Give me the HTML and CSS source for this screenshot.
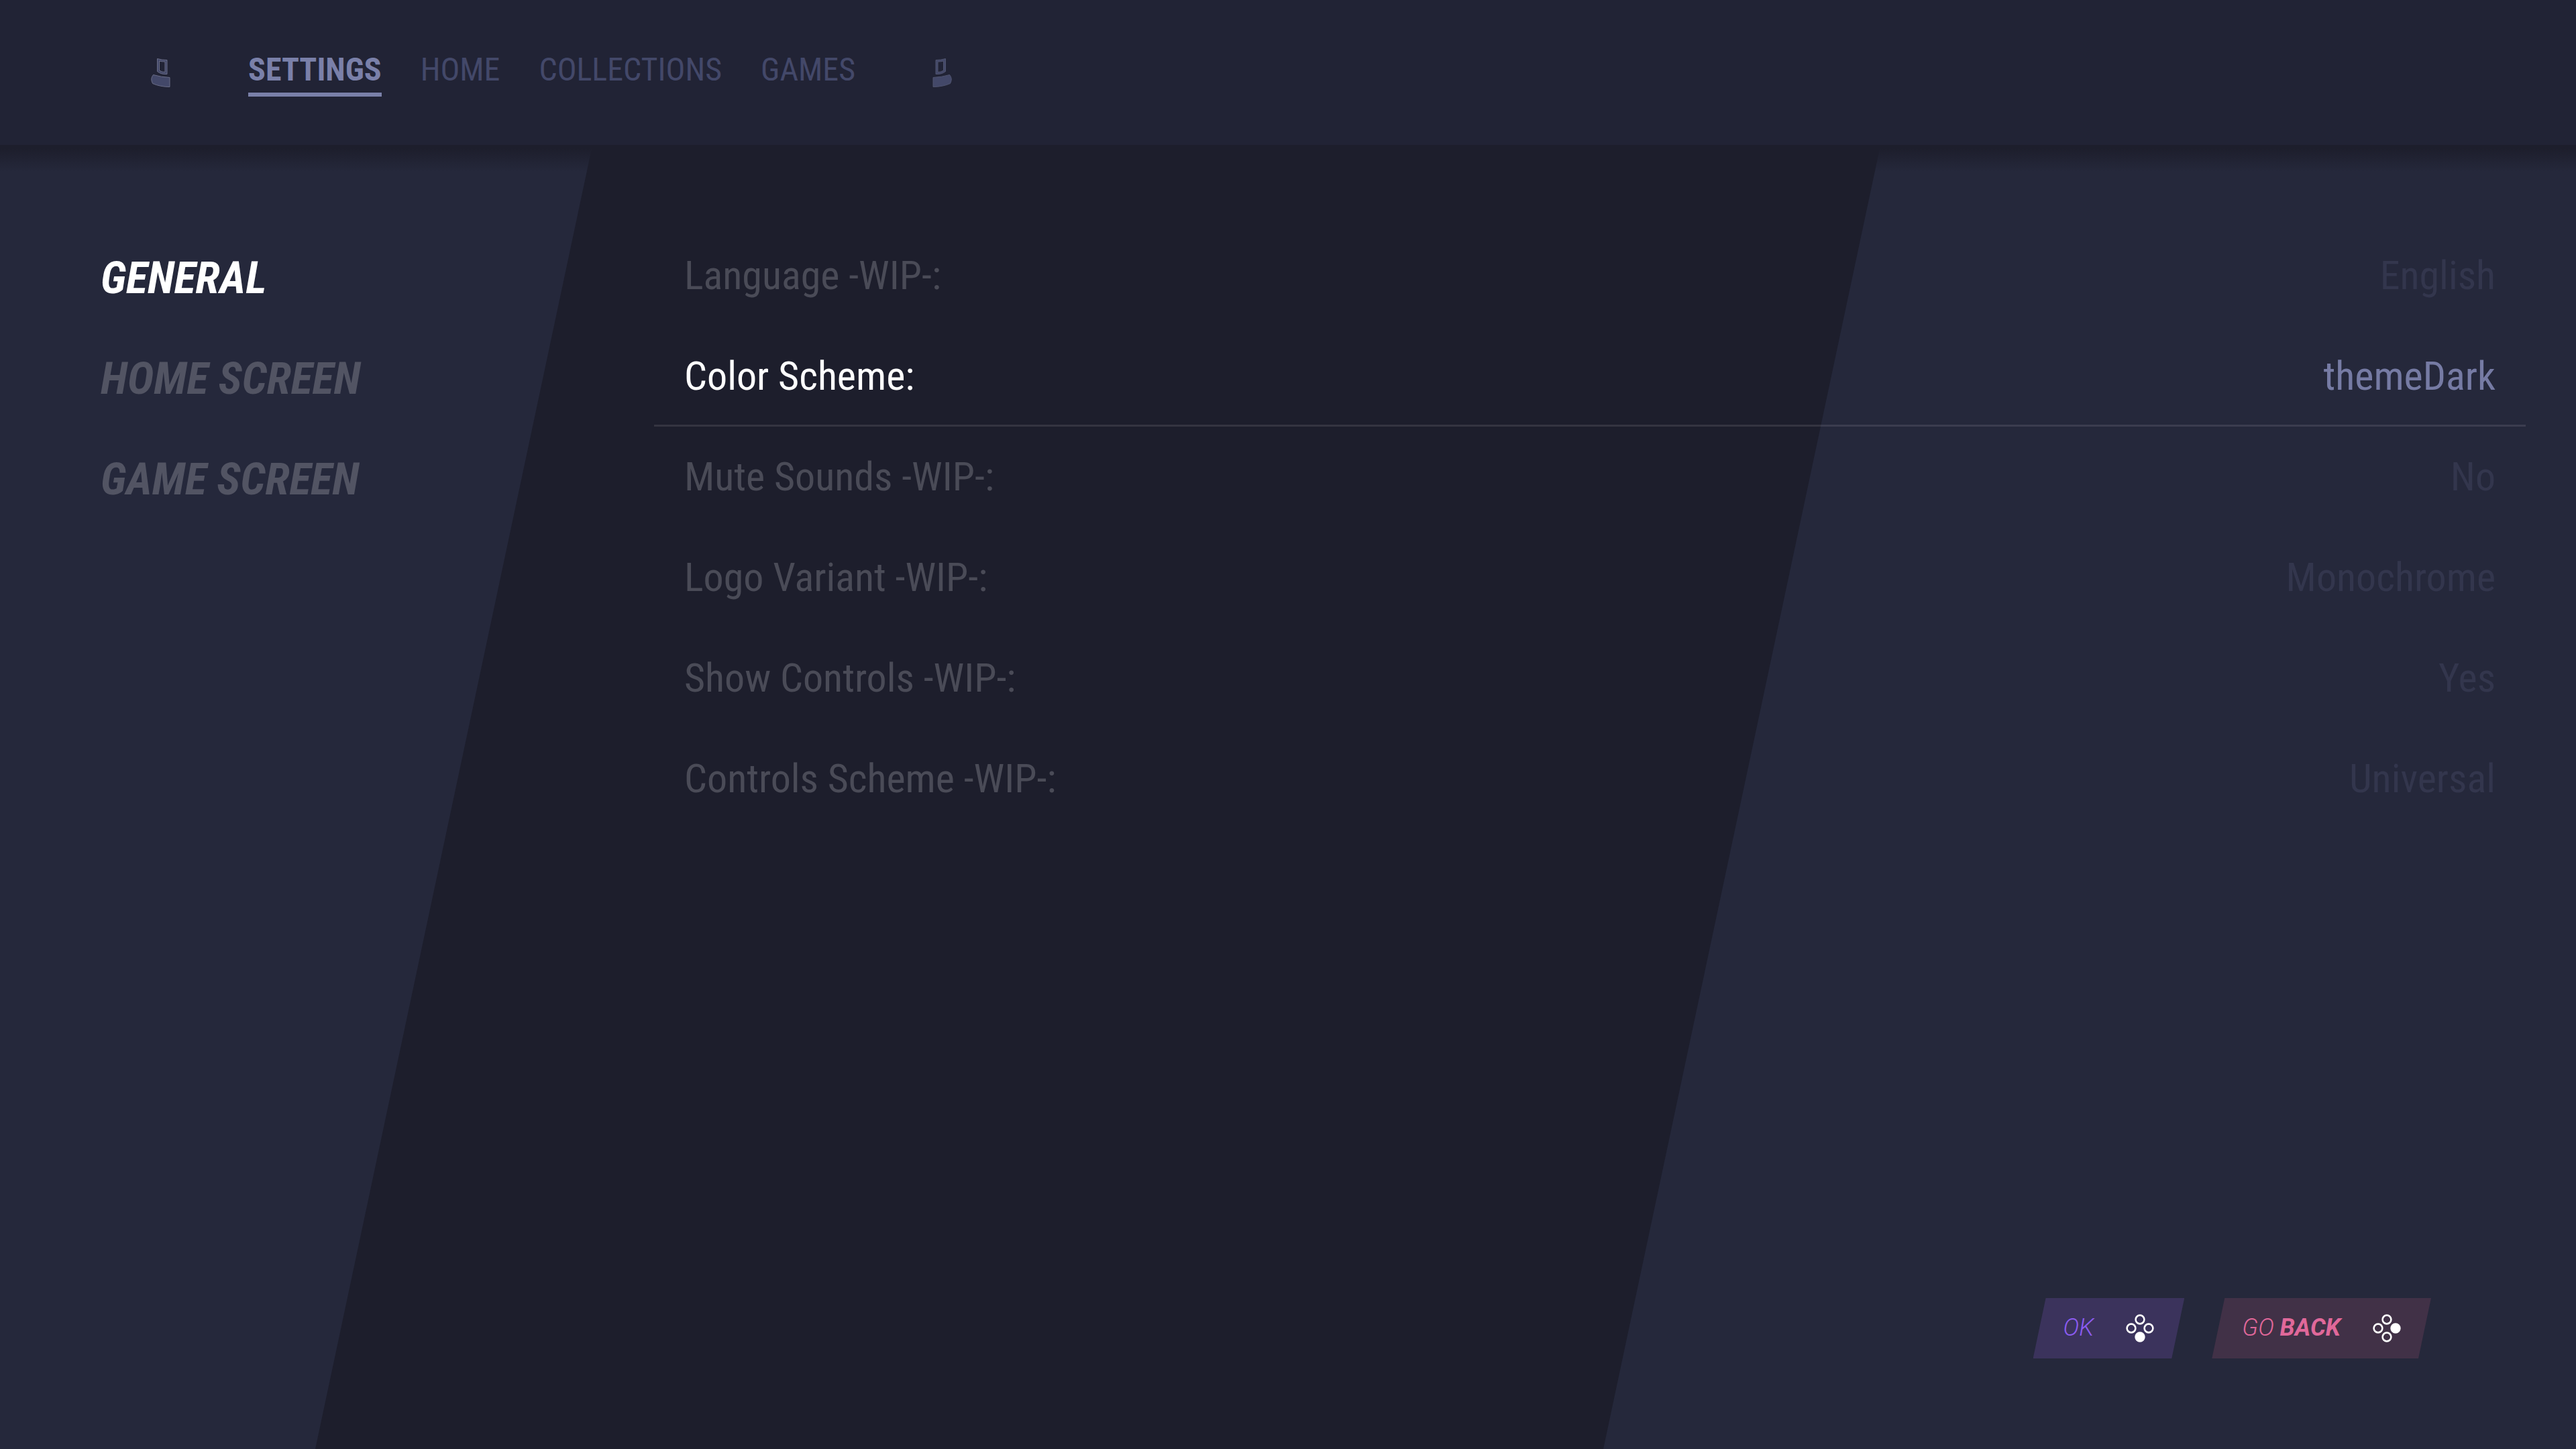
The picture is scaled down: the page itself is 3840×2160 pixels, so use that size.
FILE: index.html
```html
<!DOCTYPE html>
<html lang="en">
<head>
<meta charset="utf-8">
<title>Settings</title>
<link rel="stylesheet" href="styles.css">
</head>
<body>
<header class="topbar">
  <svg class="bumper" viewBox="0 0 32 46" aria-hidden="true">
    <path class="bumper-shape" fill-rule="evenodd" d="M11.5 1.5 Q18 3.5 26 3.5 V24.5 Q17 25 11.5 20.5 Z M14.500 5 V19 Q18 21.500 23 21.500 V6 Q18 6 14.500 5 Z"/>
    <path class="bumper-shape" d="M5.500 25.500 Q17 29 30 29.500 V43.500 Q16 43.500 4.500 38.500 Q0.500 31 5.500 25.500 Z"/>
  </svg>
  <nav class="tabs">
    <a class="tab tab-active" href="#settings">SETTINGS</a>
    <a class="tab" href="#home">HOME</a>
    <a class="tab" href="#collections">COLLECTIONS</a>
    <a class="tab" href="#games">GAMES</a>
  </nav>
  <svg class="bumper bumper-right" viewBox="0 0 32 46" aria-hidden="true">
    <path class="bumper-shape" fill-rule="evenodd" d="M11.500 1.500 Q18 3.500 26 3.500 V24.500 Q17 25 11.500 20.500 Z M14.500 5 V19 Q18 21.500 23 21.500 V6 Q18 6 14.500 5 Z" transform="matrix(-1 0 0 1 32 0)"/>
    <path class="bumper-shape" d="M5.500 25.500 Q17 29 30 29.500 V43.500 Q16 43.500 4.500 38.500 Q0.500 31 5.500 25.500 Z" transform="matrix(-1 0 0 1 32 0)"/>
  </svg>
</header>
<main class="screen">
  <div class="panes">
    <nav class="sections">
      <a class="section section-active" href="#general">GENERAL</a>
      <a class="section" href="#home-screen">HOME SCREEN</a>
      <a class="section" href="#game-screen">GAME SCREEN</a>
    </nav>
    <dl class="options">
      <div class="option"><dt>Language -WIP-:</dt><dd>English</dd></div>
      <div class="option option-active"><dt>Color Scheme:</dt><dd>themeDark</dd></div>
      <div class="option"><dt>Mute Sounds -WIP-:</dt><dd>No</dd></div>
      <div class="option"><dt>Logo Variant -WIP-:</dt><dd>Monochrome</dd></div>
      <div class="option"><dt>Show Controls -WIP-:</dt><dd>Yes</dd></div>
      <div class="option"><dt>Controls Scheme -WIP-:</dt><dd>Universal</dd></div>
    </dl>
  </div>
  <footer class="actions">
    <button class="action action-ok" type="button">
      <span class="action-label">OK</span>
      <svg class="pad" viewBox="0 0 42 42" aria-hidden="true">
        <circle cx="21" cy="8" r="6.4"/><circle cx="8" cy="21" r="6.4"/><circle cx="34" cy="21" r="6.4"/><circle class="pressed" cx="21" cy="34" r="6.4"/>
      </svg>
    </button>
    <button class="action action-back" type="button">
      <span class="action-label">GO <b>BACK</b></span>
      <svg class="pad" viewBox="0 0 42 42" aria-hidden="true">
        <circle cx="21" cy="8" r="6.4"/><circle cx="8" cy="21" r="6.4"/><circle class="pressed" cx="34" cy="21" r="6.4"/><circle cx="21" cy="34" r="6.4"/>
      </svg>
    </button>
  </footer>
</main>
</body>
</html>
```

FILE: styles.css
```css
* { box-sizing: border-box; }

body {
  margin: 0;
  min-height: 100vh;
  display: flex;
  flex-direction: column;
  background: #25283b;
  color: #fff;
  font-family: "Roboto Condensed", Roboto, sans-serif;
}

a { color: inherit; text-decoration: none; }

.topbar {
  display: flex;
  align-items: flex-start;
  height: 216px;
  padding: 72px 223px 0;
  background: #212335;
}

.bumper { width: 32px; height: 46px; margin-top: 14px; }
.bumper-shape { fill: #434869; stroke: #6a6d87; stroke-width: 1; }
.bumper-right .bumper-shape { stroke: #50546f; }

.tabs { display: flex; gap: 58px; margin: 0 114px 0 115px; }
.tab {
  padding-bottom: 2px;
  border-bottom: 6px solid transparent;
  color: #434869;
  font-size: 48px;
  line-height: 64px;
}
.tab-active { border-color: #7a80a9; color: #7a80a9; font-weight: 700; }

.screen {
  position: relative;
  flex: 1;
  display: flex;
  flex-direction: column;
  justify-content: space-between;
}
.screen::before {
  content: "";
  position: absolute;
  inset: 0;
  background: #1d1e2c;
  clip-path: polygon(23% 0, 73% 0, 62.24% 100%, 12.24% 100%);
}
.screen::after {
  content: "";
  position: absolute;
  inset: 0 0 auto;
  height: 40px;
  background: linear-gradient(#1d1e2c 12%, transparent);
}

.panes {
  position: relative;
  display: flex;
  padding: 120px 75px 0 0;
}
.sections {
  flex: 0 0 975px;
  display: flex;
  flex-direction: column;
  padding: 3px 0 0 150px;
}
.section {
  color: #525463;
  font-size: 67px;
  font-style: italic;
  font-weight: 700;
  line-height: 150px;
}
.section-active { color: #fff; }

.options { flex: 1; margin: 0; }
.option {
  display: flex;
  justify-content: space-between;
  height: 150px;
  padding: 0 45px;
  color: #4a4b57;
  font-size: 60px;
  line-height: 150px;
}
.option dd { margin: 0; color: #33364d; }
.option-active { border-bottom: 3px solid rgba(255, 255, 255, 0.1); color: #fff; }
.option-active dd { color: #767ba4; }

.actions {
  position: relative;
  display: flex;
  justify-content: flex-end;
  gap: 41px;
  padding: 0 216px 135px;
}
.action {
  display: flex;
  align-items: center;
  gap: 48px;
  height: 90px;
  padding: 0 45px;
  border: 0;
  clip-path: polygon(19px 0, 100% 0, calc(100% - 19px) 100%, 0 100%);
  font-family: Roboto, sans-serif;
  font-size: 36px;
  font-style: italic;
  font-weight: 300;
}
.action-label { padding-bottom: 2px; }
.action b { font-weight: 700; }
.action-ok { background: #3b335c; color: #8b5cf0; }
.action-back { background: #413147; color: #e0689a; }
.pad { width: 42px; height: 42px; }
.pad circle { fill: none; stroke: #fff; stroke-width: 2.6; }
.pad .pressed { fill: #fff; }
```
